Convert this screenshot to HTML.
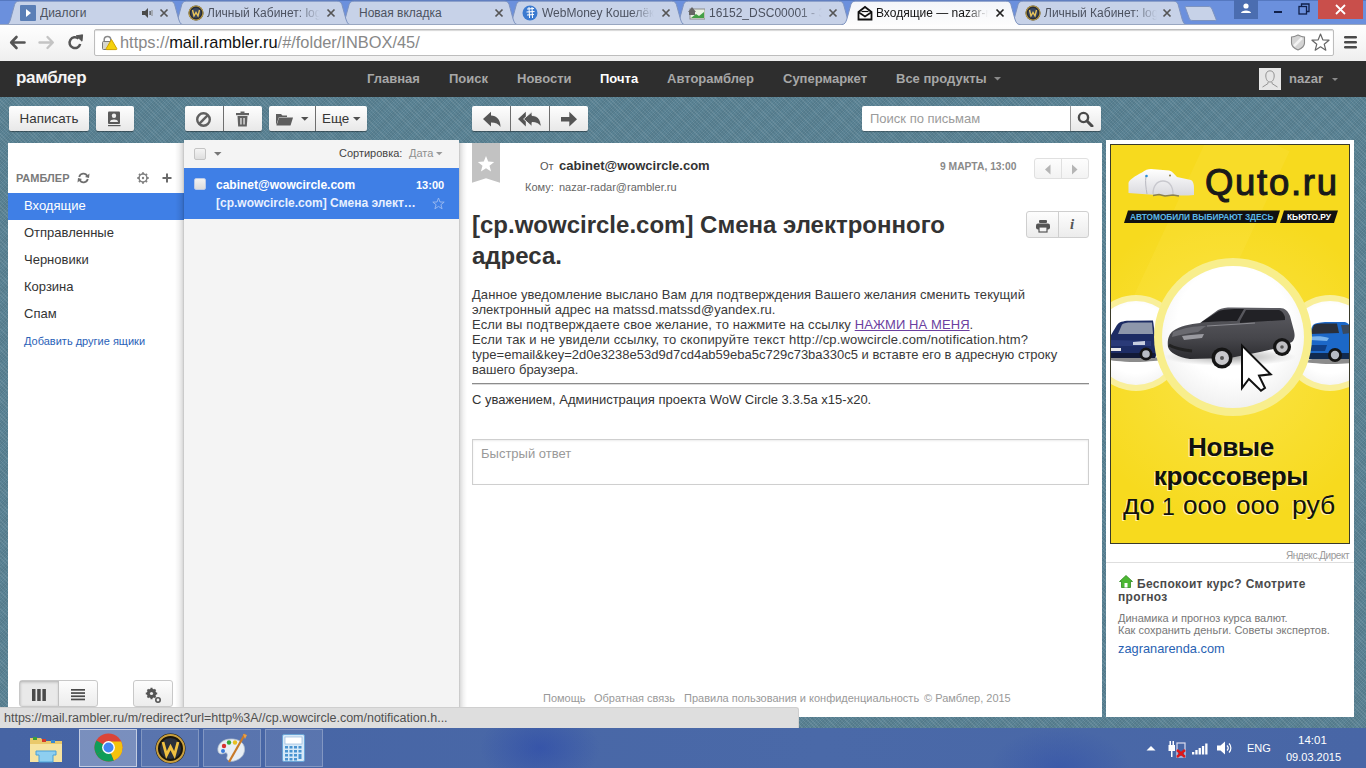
<!DOCTYPE html>
<html><head><meta charset="utf-8">
<style>
*{box-sizing:border-box;margin:0;padding:0}
html,body{width:1366px;height:768px;overflow:hidden;font-family:"Liberation Sans",sans-serif;background:#5a8191;position:relative}
.a{position:absolute}
.nw{white-space:nowrap}
#frame{left:0;top:0;width:1366px;height:25px;background:#6b90dd;border-top:1px solid #5578c0}
.tt{position:absolute;top:6px;font-size:12px;line-height:14px;color:#4c5260;white-space:nowrap;overflow:hidden}
.tx{position:absolute;top:8px;width:9px;height:9px}
#toolbar{left:0;top:25px;width:1366px;height:36px;background:linear-gradient(#fefefe,#f6f6f6 60%,#eeeeee)}
#omni{left:94px;top:29px;width:1240px;height:27px;background:#fff;border:1px solid #bdbdbd;border-radius:2px;box-shadow:inset 0 1px 1px #d8d8d8}
#url{left:120px;top:33px;font-size:16.4px;line-height:19px;color:#888}
#hdr{left:0;top:61px;width:1366px;height:36px;background:#2e2e2e}
.nav{position:absolute;top:71px;font-size:13px;line-height:15px;font-weight:bold;color:#a7a7a7;white-space:nowrap}
#denim{left:0;top:97px;width:1366px;height:631px;background-color:#5a8395;background-image:repeating-linear-gradient(45deg,rgba(255,255,255,.09) 0 1px,transparent 1px 3px),repeating-linear-gradient(-45deg,rgba(0,0,0,.07) 0 1px,transparent 1px 2px)}
.btn{position:absolute;top:106px;height:25px;background:linear-gradient(#fefefe,#e8e8e8);border-radius:2px;box-shadow:0 1px 1px rgba(0,0,0,.4);color:#363636;font-size:13.4px;line-height:25px;text-align:center}
.sep{position:absolute;top:106px;width:1px;height:25px;background:#c9c9c9}
</style></head>
<body>
<div id="frame" class="a"></div>
<svg class="a" style="left:0;top:0" width="1366" height="26" viewBox="0 0 1366 26">
<path d="M1010.1,24.5 C1012.1,24.5 1013.1,22 1014.1,19 L1018.1,4.5 C1019.1,2 1020.1,1.2 1023.1,1.2 L1173.1,1.2 C1176.1,1.2 1177.1,2 1178.1,4.5 L1182.1,19 C1183.1,22 1184.1,24.5 1186.1,24.5 Z" fill="#c7d2e8" stroke="#7d93c0" stroke-width="1"/>
<path d="M675.6,24.5 C677.6,24.5 678.6,22 679.6,19 L683.6,4.5 C684.6,2 685.6,1.2 688.6,1.2 L838.6,1.2 C841.6,1.2 842.6,2 843.6,4.5 L847.6,19 C848.6,22 849.6,24.5 851.6,24.5 Z" fill="#c7d2e8" stroke="#7d93c0" stroke-width="1"/>
<path d="M508.4,24.5 C510.4,24.5 511.4,22 512.4,19 L516.4,4.5 C517.4,2 518.4,1.2 521.4,1.2 L671.4,1.2 C674.4,1.2 675.4,2 676.4,4.5 L680.4,19 C681.4,22 682.4,24.5 684.4,24.5 Z" fill="#c7d2e8" stroke="#7d93c0" stroke-width="1"/>
<path d="M341.1,24.5 C343.1,24.5 344.1,22 345.1,19 L349.1,4.5 C350.1,2 351.1,1.2 354.1,1.2 L504.1,1.2 C507.1,1.2 508.1,2 509.1,4.5 L513.1,19 C514.1,22 515.1,24.5 517.1,24.5 Z" fill="#c7d2e8" stroke="#7d93c0" stroke-width="1"/>
<path d="M173.8,24.5 C175.8,24.5 176.8,22 177.8,19 L181.8,4.5 C182.8,2 183.8,1.2 186.8,1.2 L336.9,1.2 C339.9,1.2 340.9,2 341.9,4.5 L345.9,19 C346.9,22 347.9,24.5 349.9,24.5 Z" fill="#c7d2e8" stroke="#7d93c0" stroke-width="1"/>
<path d="M6.6,24.5 C8.6,24.5 9.6,22 10.6,19 L14.6,4.5 C15.6,2 16.6,1.2 19.6,1.2 L169.6,1.2 C172.6,1.2 173.6,2 174.6,4.5 L178.6,19 C179.6,22 180.6,24.5 182.6,24.5 Z" fill="#c7d2e8" stroke="#7d93c0" stroke-width="1"/>
<path d="M1186,6.5 L1208,6.5 C1210,6.5 1211,7 1212,9 L1216,19 C1216.5,20 1216,20.5 1215,20.5 L1193,20.5 C1191,20.5 1190,20 1189.5,19 L1185.5,8 C1185,7 1185.5,6.5 1186,6.5 Z" fill="#c7d2e8" stroke="#7d93c0" stroke-width="1"/>
<rect x="0" y="24" width="1366" height="2" fill="#98a6c0"/>
<defs><linearGradient id="ag" x1="0" y1="0" x2="0" y2="1"><stop offset="0" stop-color="#f3f5f9"/><stop offset="1" stop-color="#fdfdfd"/></linearGradient></defs>
<path d="M841.9,26 L841.9,24.5 C844.9,24.5 845.9,22 846.9,19 L850.9,4.5 C851.9,2 852.9,1.2 855.9,1.2 L1005.9,1.2 C1008.9,1.2 1009.9,2 1010.9,4.5 L1014.9,19 C1015.9,22 1016.9,24.5 1019.9,24.5 L1019.9,26 Z" fill="url(#ag)" stroke="#7d93c0" stroke-width="1"/>
</svg>
<div class="a" style="left:20px;top:5px;width:16px;height:16px;background:#5a7eb6;border-radius:1px"></div>
<svg class="a" style="left:20px;top:5px" width="16" height="16"><path d="M6,4 L11,8 L6,12 Z" fill="#fff"/></svg>
<svg class="a" style="left:188px;top:5px" width="16" height="16"><circle cx="8" cy="8" r="7.5" fill="#2a2d33"/><circle cx="8" cy="8" r="7" fill="none" stroke="#b89a45" stroke-width="1.2"/><circle cx="8" cy="8" r="5" fill="#39475e"/><path d="M4.5,5 L6,11 L8,7.5 L10,11 L11.5,5" fill="none" stroke="#e8c45a" stroke-width="1.4"/></svg>
<svg class="a" style="left:1025px;top:5px" width="16" height="16"><circle cx="8" cy="8" r="7.5" fill="#2a2d33"/><circle cx="8" cy="8" r="7" fill="none" stroke="#b89a45" stroke-width="1.2"/><circle cx="8" cy="8" r="5" fill="#39475e"/><path d="M4.5,5 L6,11 L8,7.5 L10,11 L11.5,5" fill="none" stroke="#e8c45a" stroke-width="1.4"/></svg>
<svg class="a" style="left:522px;top:5px" width="16" height="16"><circle cx="8" cy="8" r="7.5" fill="#3b7ad0"/><path d="M5,4 L12,3.5 M4.5,7 L12.5,6.5 M5,10 L12,9.5 M7,2 L7.5,13 M10,2 L10.5,13" stroke="#fff" stroke-width="1"/></svg>
<svg class="a" style="left:688px;top:6px" width="17" height="14"><rect x="2" y="3" width="15" height="10" fill="#eaf2e4" stroke="#8a8a8a" stroke-width="1"/><path d="M3,12 L8,8 L11,10 L16,6 L16,12 Z" fill="#43a046"/><path d="M0,6 L4,1 L8,6 L7,6 L7,9 L1,9 L1,6Z" fill="#666"/></svg>
<svg class="a" style="left:857px;top:5px" width="16" height="16"><path d="M1.5,7 L8,2 L14.5,7 L14.5,14.5 L1.5,14.5 Z" fill="#fff" stroke="#111" stroke-width="1.8"/><path d="M2,7.5 L8,11.5 L14,7.5" fill="none" stroke="#111" stroke-width="1.6"/><path d="M4.5,6.5 L11.5,6.5" stroke="#111" stroke-width="1.2"/></svg>
<div class="tt" style="left:40px;width:95px;color:#4c5260">Диалоги</div>
<div class="tt" style="left:207px;width:113px;color:#4c5260;-webkit-mask-image:linear-gradient(90deg,#000 80%,transparent)">Личный Кабинет: log</div>
<div class="tt" style="left:359px;width:130px;color:#4c5260">Новая вкладка</div>
<div class="tt" style="left:542px;width:112px;color:#4c5260;-webkit-mask-image:linear-gradient(90deg,#000 80%,transparent)">WebMoney Кошелёк</div>
<div class="tt" style="left:709px;width:113px;color:#4c5260;-webkit-mask-image:linear-gradient(90deg,#000 80%,transparent)">16152_DSC00001 - За</div>
<div class="tt" style="left:876px;width:112px;color:#111;-webkit-mask-image:linear-gradient(90deg,#000 80%,transparent)">Входящие — nazar-ra</div>
<div class="tt" style="left:1044px;width:113px;color:#4c5260;-webkit-mask-image:linear-gradient(90deg,#000 80%,transparent)">Личный Кабинет: log</div>
<svg class="a" style="left:159px;top:8px" width="10" height="10"><path d="M1.5,1.5 L8.5,8.5 M8.5,1.5 L1.5,8.5" stroke="#555" stroke-width="1.7"/></svg>
<svg class="a" style="left:326px;top:8px" width="10" height="10"><path d="M1.5,1.5 L8.5,8.5 M8.5,1.5 L1.5,8.5" stroke="#555" stroke-width="1.7"/></svg>
<svg class="a" style="left:494px;top:8px" width="10" height="10"><path d="M1.5,1.5 L8.5,8.5 M8.5,1.5 L1.5,8.5" stroke="#555" stroke-width="1.7"/></svg>
<svg class="a" style="left:661px;top:8px" width="10" height="10"><path d="M1.5,1.5 L8.5,8.5 M8.5,1.5 L1.5,8.5" stroke="#555" stroke-width="1.7"/></svg>
<svg class="a" style="left:828px;top:8px" width="10" height="10"><path d="M1.5,1.5 L8.5,8.5 M8.5,1.5 L1.5,8.5" stroke="#555" stroke-width="1.7"/></svg>
<svg class="a" style="left:995px;top:8px" width="10" height="10"><path d="M1.5,1.5 L8.5,8.5 M8.5,1.5 L1.5,8.5" stroke="#222" stroke-width="1.7"/></svg>
<svg class="a" style="left:1162px;top:8px" width="10" height="10"><path d="M1.5,1.5 L8.5,8.5 M8.5,1.5 L1.5,8.5" stroke="#555" stroke-width="1.7"/></svg>
<svg class="a" style="left:142px;top:8px" width="11" height="10"><path d="M0,3 L3,3 L6,0 L6,10 L3,7 L0,7 Z" fill="#4a4a4a"/><rect x="7.5" y="3" width="1.2" height="4" fill="#4a4a4a"/><rect x="9.5" y="2" width="1" height="6" fill="#888"/></svg>
<div class="a" style="left:1234px;top:0;width:24px;height:19px;background:#4b6db0"></div>
<svg class="a" style="left:1234px;top:0" width="24" height="19"><circle cx="12" cy="6" r="2.6" fill="#fff"/><path d="M7,13 C7,9.5 17,9.5 17,13 Z" fill="#fff"/></svg>
<div class="a" style="left:1274px;top:11px;width:8px;height:2px;background:#10204a"></div>
<svg class="a" style="left:1298px;top:3px" width="12" height="12"><rect x="1" y="3.5" width="7.5" height="7.5" fill="none" stroke="#10204a" stroke-width="1.3"/><path d="M3.5,3 L3.5,1 L11,1 L11,8.5 L9,8.5" fill="none" stroke="#10204a" stroke-width="1.3"/></svg>
<div class="a" style="left:1318px;top:0;width:45px;height:19px;background:#c94f4b"></div>
<svg class="a" style="left:1318px;top:0" width="45" height="19"><path d="M18,5 L27,14 M27,5 L18,14" stroke="#fff" stroke-width="1.8"/></svg>
<div id="toolbar" class="a"></div>
<svg class="a" style="left:9px;top:35px" width="17" height="15"><path d="M7.5,2 L2.2,7.5 L7.5,13 M2.5,7.5 L15.5,7.5" fill="none" stroke="#555" stroke-width="2.6" stroke-linecap="round" stroke-linejoin="round"/></svg>
<svg class="a" style="left:38px;top:35px" width="17" height="15"><path d="M9.5,2 L14.8,7.5 L9.5,13 M14.5,7.5 L1.5,7.5" fill="none" stroke="#c4c4c4" stroke-width="2.4" stroke-linecap="round" stroke-linejoin="round"/></svg>
<svg class="a" style="left:67px;top:34px" width="17" height="16"><path d="M13.2,10 A5.4,5.4 0 1 1 11.5,4.6" fill="none" stroke="#555" stroke-width="2.5"/><path d="M9.2,1.8 L15.6,0.8 L15,7.2 Z" fill="#555" stroke="#555" stroke-width="1" stroke-linejoin="round"/></svg>
<div id="omni" class="a"></div>
<svg class="a" style="left:101px;top:35px" width="17" height="16"><path d="M3.2,7 L3.2,4.8 A3.3,3.3 0 0 1 9.8,4.8 L9.8,7" fill="none" stroke="#8a8a8a" stroke-width="1.5"/><rect x="1.5" y="6.5" width="10" height="8" rx="1" fill="#d6d6cc" stroke="#7a7a7a"/><path d="M10.5,4.5 L15.8,13.6 C16.1,14.2 15.8,14.6 15.2,14.6 L5.8,14.6 C5.2,14.6 4.9,14.2 5.2,13.6 Z" fill="#f5d10a" stroke="#d2a400" stroke-width="1" stroke-linejoin="round"/></svg>
<div id="url" class="a nw">https://<span style="color:#111">mail.rambler.ru</span>/#/folder/INBOX/45/</div>
<svg class="a" style="left:1290px;top:34px" width="16" height="17"><path d="M8,1 C5,2.5 3,3 1.5,3 L1.5,9 C1.5,12.5 4.5,14.5 8,16 C11.5,14.5 14.5,12.5 14.5,9 L14.5,3 C13,3 11,2.5 8,1 Z" fill="#d4d4d4" stroke="#8a8a8a" stroke-width="1.1"/><path d="M4,12 L12,4" stroke="#f2f2f2" stroke-width="2.5"/></svg>
<svg class="a" style="left:1311px;top:33px" width="19" height="18"><path d="M9.5,1 L11.8,6.8 L18,7.2 L13.2,11.2 L14.8,17.2 L9.5,13.8 L4.2,17.2 L5.8,11.2 L1,7.2 L7.2,6.8 Z" fill="#fff" stroke="#666" stroke-width="1.2" stroke-linejoin="round"/></svg>
<svg class="a" style="left:1344px;top:35px" width="14" height="14"><rect x="0" y="1" width="13" height="2.4" rx="1.2" fill="#4a4a4a"/><rect x="0" y="6" width="13" height="2.4" rx="1.2" fill="#4a4a4a"/><rect x="0" y="11" width="13" height="2.4" rx="1.2" fill="#4a4a4a"/></svg>
<div id="hdr" class="a"></div>
<div class="a nw" style="left:16px;top:68px;font-size:17px;line-height:20px;font-weight:bold;color:#f4f4f4;letter-spacing:-0.35px">рамблер</div>
<div class="nav" style="left:367px">Главная</div>
<div class="nav" style="left:449px">Поиск</div>
<div class="nav" style="left:517px">Новости</div>
<div class="nav" style="left:600px;color:#fff">Почта</div>
<div class="nav" style="left:667px">Авторамблер</div>
<div class="nav" style="left:783px">Супермаркет</div>
<div class="nav" style="left:896px">Все продукты</div>
<svg class="a" style="left:994px;top:77px" width="8" height="4"><path d="M0,0 L7,0 L3.5,3.5Z" fill="#8a8a8a"/></svg>
<div class="a" style="left:1259px;top:68px;width:22px;height:22px;background:#e6e6e6"></div>
<svg class="a" style="left:1259px;top:68px" width="22" height="22"><path d="M11,2.8 C8.2,2.8 6.6,5 6.8,8 C7,11.5 8.5,14 11,14 C13.5,14 15,11.5 15.2,8 C15.4,5 13.8,2.8 11,2.8 Z M9,14 L9,15.5 C7,17 5,18 3.5,19 M13,14 L13,15.5 C15,17 17,18 18.5,19" fill="none" stroke="#8a8a8a" stroke-width="0.9"/></svg>
<div class="nav" style="left:1289px">nazar</div>
<svg class="a" style="left:1332px;top:78px" width="7" height="4"><path d="M0,0 L6,0 L3,3Z" fill="#8a8a8a"/></svg>
<div id="denim" class="a"></div>
<!-- toolbar buttons -->
<div class="btn" style="left:9px;width:80px">Написать</div>
<div class="btn" style="left:96px;width:38px"></div>
<svg class="a" style="left:106px;top:111px" width="17" height="16"><rect x="2" y="0.5" width="12" height="12.5" rx="1" fill="#5a5a5a"/><circle cx="8" cy="4.8" r="2.2" fill="#eee"/><path d="M4,11 C4,7.8 12,7.8 12,11 Z" fill="#eee"/><rect x="2" y="14" width="12.5" height="1.2" fill="#5a5a5a"/></svg>
<div class="btn" style="left:185px;width:77px"></div>
<div class="a" style="left:223px;top:106px;width:1px;height:25px;background:#6e6e6e"></div>
<svg class="a" style="left:195px;top:111px" width="17" height="17"><circle cx="8.5" cy="8.5" r="6.3" fill="none" stroke="#606060" stroke-width="2.4"/><path d="M4.2,12.8 L12.8,4.2" stroke="#606060" stroke-width="2.4"/></svg>
<svg class="a" style="left:236px;top:111px" width="14" height="17"><rect x="0" y="2" width="13" height="2.2" fill="#606060"/><rect x="4.5" y="0.5" width="4" height="2" fill="#606060"/><path d="M1.5,5 L11.5,5 L10.8,15.5 L2.2,15.5 Z" fill="#606060"/><rect x="4.3" y="7" width="1.3" height="6.5" fill="#e8e8e8"/><rect x="7.4" y="7" width="1.3" height="6.5" fill="#e8e8e8"/></svg>
<div class="btn" style="left:269px;width:98px"></div>
<div class="a" style="left:315px;top:106px;width:1px;height:25px;background:#6e6e6e"></div>
<svg class="a" style="left:275px;top:112px" width="19" height="15"><path d="M1,2 L6,2 L7.5,3.5 L12,3.5 L12,5 L4,5 L1,13.5 Z" fill="#5e5e5e"/><path d="M4,5.5 L18,5.5 L15.5,13.5 L1.5,13.5 Z" fill="#5e5e5e"/></svg>
<svg class="a" style="left:301px;top:117px" width="8" height="4"><path d="M0,0 L7.5,0 L3.75,3.75Z" fill="#505050"/></svg>
<div class="a nw" style="left:322px;top:111px;font-size:13.4px;line-height:15px;color:#363636">Еще</div>
<svg class="a" style="left:353px;top:117px" width="8" height="4"><path d="M0,0 L7.5,0 L3.75,3.75Z" fill="#505050"/></svg>
<div class="btn" style="left:472px;width:116px"></div>
<div class="a" style="left:510px;top:106px;width:1px;height:25px;background:#6e6e6e"></div>
<div class="a" style="left:549px;top:106px;width:1px;height:25px;background:#6e6e6e"></div>
<svg class="a" style="left:472px;top:106px" width="116" height="25"><path d="M11,13 L19,5.8 L19,9.5 C24.5,9.5 28.5,13.5 28.5,21 C26.5,17.8 23.5,16.5 19,16.5 L19,20.5 Z" fill="#555"/><path d="M46,13 L53.8,5.8 L53.8,20.5 Z" fill="#555"/><path d="M51.6,13 L60,5.8 L60,9.5 C65.5,9.5 69.2,13.5 69.2,21 C67.2,17.8 64.2,16.5 60,16.5 L60,20.5 Z" fill="#555" stroke="#f4f4f4" stroke-width="0.9"/><path d="M89,11 L97.3,11 L97.3,5.8 L105,13.2 L97.3,20.5 L97.3,15.6 L89,15.6 Z" fill="#555"/></svg>
<div class="a" style="left:862px;top:106px;width:209px;height:25px;background:#fff;border-radius:2px 0 0 2px;box-shadow:0 1px 1px rgba(0,0,0,.3)"></div>
<div class="a nw" style="left:870px;top:111px;font-size:13px;line-height:15px;color:#9b9b9b">Поиск по письмам</div>
<div class="btn" style="left:1071px;width:30px;border-radius:0 2px 2px 0"></div>
<div class="a" style="left:1070px;top:106px;width:1px;height:25px;background:#9a9a9a"></div>
<svg class="a" style="left:1077px;top:111px" width="17" height="16"><circle cx="6.5" cy="6.5" r="4.6" fill="none" stroke="#4a4a4a" stroke-width="2.4"/><path d="M10,10 L15,15" stroke="#4a4a4a" stroke-width="3" stroke-linecap="round"/></svg>
<!-- left panel -->
<div class="a" style="left:8px;top:143px;width:176px;height:574px;background:#fff"></div>
<div class="a nw" style="left:16px;top:172px;font-size:11px;line-height:13px;font-weight:bold;color:#7a7a7a">РАМБЛЕР</div>
<svg class="a" style="left:77px;top:172px" width="13" height="12"><path d="M2.2,5 A4.3,4.3 0 0 1 10.3,4.2" fill="none" stroke="#6e6e6e" stroke-width="1.8"/><path d="M10.8,7 A4.3,4.3 0 0 1 2.7,7.8" fill="none" stroke="#6e6e6e" stroke-width="1.8"/><path d="M12.5,1.5 L12,6 L8,5Z" fill="#6e6e6e"/><path d="M0.5,10.5 L1,6 L5,7Z" fill="#6e6e6e"/></svg>
<svg class="a" style="left:137px;top:172px" width="12" height="12"><path d="M6,0.3 L6,11.7 M0.3,6 L11.7,6 M2,2 L10,10 M10,2 L2,10" stroke="#808080" stroke-width="1.9"/><circle cx="6" cy="6" r="3.9" fill="#fff" stroke="#808080" stroke-width="1.5"/><circle cx="6" cy="6" r="1.2" fill="#808080"/></svg>
<svg class="a" style="left:162px;top:173px" width="10" height="10"><path d="M5,0.5 L5,9.5 M0.5,5 L9.5,5" stroke="#6a6a6a" stroke-width="2"/></svg>
<div class="a" style="left:8px;top:193px;width:176px;height:27px;background:#3f7fe6"></div>
<div class="a nw" style="left:24px;top:198px;font-size:13px;line-height:15px;color:#fff">Входящие</div>
<div class="a nw" style="left:24px;top:225px;font-size:13px;line-height:15px;color:#333">Отправленные</div>
<div class="a nw" style="left:24px;top:252px;font-size:13px;line-height:15px;color:#333">Черновики</div>
<div class="a nw" style="left:24px;top:279px;font-size:13px;line-height:15px;color:#333">Корзина</div>
<div class="a nw" style="left:24px;top:306px;font-size:13px;line-height:15px;color:#333">Спам</div>
<div class="a nw" style="left:24px;top:335px;font-size:11px;line-height:13px;color:#2a62b8">Добавить другие ящики</div>
<div class="a" style="left:19px;top:680px;width:79px;height:27px;border:1px solid #c8c8c8;border-radius:3px;background:linear-gradient(#fdfdfd,#ececec)"></div>
<div class="a" style="left:20px;top:681px;width:39px;height:25px;background:#e9e9e9;box-shadow:inset 0 1px 3px rgba(0,0,0,.25)"></div>
<div class="a" style="left:58px;top:681px;width:1px;height:25px;background:#c0c0c0"></div>
<svg class="a" style="left:32px;top:689px" width="14" height="12"><rect x="0" y="0" width="3.5" height="12" fill="#4a4a4a"/><rect x="5.2" y="0" width="3.5" height="12" fill="#4a4a4a"/><rect x="10.4" y="0" width="3.5" height="12" fill="#4a4a4a"/></svg>
<svg class="a" style="left:71px;top:689px" width="14" height="12"><rect x="0" y="0" width="14" height="1.7" fill="#4a4a4a"/><rect x="0" y="3.2" width="14" height="1.7" fill="#4a4a4a"/><rect x="0" y="6.4" width="14" height="1.7" fill="#4a4a4a"/><rect x="0" y="9.6" width="14" height="1.7" fill="#4a4a4a"/></svg>
<div class="a" style="left:133px;top:680px;width:40px;height:27px;border:1px solid #c8c8c8;border-radius:3px;background:linear-gradient(#fdfdfd,#ececec)"></div>
<svg class="a" style="left:145px;top:687px" width="17" height="17"><circle cx="6.5" cy="6.5" r="3.4" fill="none" stroke="#555" stroke-width="2.6"/><path d="M6.5,0.8 L6.5,12.2 M0.8,6.5 L12.2,6.5 M2.5,2.5 L10.5,10.5 M10.5,2.5 L2.5,10.5" stroke="#555" stroke-width="2"/><circle cx="6.5" cy="6.5" r="1.6" fill="#eee"/><circle cx="13" cy="13" r="2.2" fill="none" stroke="#555" stroke-width="1.6"/></svg>
<div class="a" style="left:175px;top:143px;width:9px;height:574px;background:linear-gradient(270deg,rgba(0,0,0,.24),rgba(0,0,0,.12) 20%,rgba(0,0,0,.05) 55%,rgba(0,0,0,0))"></div>
<!-- message list -->
<div class="a" style="left:184px;top:140px;width:275px;height:577px;background:#f4f4f4"></div>
<div class="a" style="left:194px;top:148px;width:12px;height:12px;border:1px solid #c4c4c4;border-radius:2px;background:linear-gradient(#f4f4f4,#dedede)"></div>
<svg class="a" style="left:214px;top:152px" width="8" height="4"><path d="M0,0 L7.5,0 L3.75,3.75Z" fill="#777"/></svg>
<div class="a nw" style="left:339px;top:147px;font-size:11px;line-height:13px;color:#444">Сортировка:</div>
<div class="a nw" style="left:409px;top:147px;font-size:11px;line-height:13px;color:#8f8f8f">Дата</div>
<svg class="a" style="left:436px;top:152px" width="7" height="4"><path d="M0,0 L6.5,0 L3.25,3.25Z" fill="#999"/></svg>
<div class="a" style="left:184px;top:168px;width:275px;height:51px;background:#3f7fe6"></div>
<div class="a" style="left:194px;top:178px;width:12px;height:12px;border:1px solid #b9c9e8;border-radius:2px;background:linear-gradient(#f2f2f2,#dcdcdc)"></div>
<div class="a nw" style="left:216px;top:178px;font-size:12px;line-height:15px;font-weight:bold;color:#fff">cabinet@wowcircle.com</div>
<div class="a nw" style="left:416px;top:179px;font-size:11px;line-height:13px;font-weight:bold;color:#fff">13:00</div>
<div class="a nw" style="left:216px;top:196px;font-size:12px;line-height:15px;font-weight:bold;color:#e8f0ff">[cp.wowcircle.com] Смена элект…</div>
<svg class="a" style="left:432px;top:197px" width="13" height="13"><path d="M6.5,1 L8,5 L12.2,5.1 L8.9,7.7 L10.1,11.8 L6.5,9.4 L2.9,11.8 L4.1,7.7 L0.8,5.1 L5,5 Z" fill="none" stroke="#9dbbef" stroke-width="0.9"/></svg>
<!-- message view -->
<div class="a" style="left:459px;top:143px;width:643px;height:574px;background:#fff"></div>
<div class="a" style="left:459px;top:143px;width:8px;height:574px;background:linear-gradient(90deg,rgba(0,0,0,.24),rgba(0,0,0,.12) 20%,rgba(0,0,0,.05) 55%,rgba(0,0,0,0))"></div>
<div class="a" style="left:184px;top:140px;width:275px;height:3px;background:#f4f4f4"></div>
<svg class="a" style="left:472px;top:143px" width="28" height="40"><path d="M0,0 L28,0 L28,39.7 L14,35.3 L0,39.7 Z" fill="#c2c2c2"/><path d="M14,13 L16.2,18.6 L22.2,18.9 L17.5,22.7 L19.1,28.5 L14,25.2 L8.9,28.5 L10.5,22.7 L5.8,18.9 L11.8,18.6 Z" fill="#fff"/></svg>
<div class="a nw" style="left:540px;top:160px;font-size:11px;line-height:13px;color:#555">От</div>
<div class="a nw" style="left:559px;top:158px;font-size:13px;line-height:15px;font-weight:bold;color:#333">cabinet@wowcircle.com</div>
<div class="a nw" style="left:525px;top:181px;font-size:11px;line-height:13px;color:#666">Кому:</div>
<div class="a nw" style="left:559px;top:181px;font-size:11px;line-height:13px;color:#666">nazar-radar@rambler.ru</div>
<div class="a nw" style="left:940px;top:161px;font-size:10.3px;line-height:12px;font-weight:bold;color:#8a8a8a">9 МАРТА, 13:00</div>
<div class="a" style="left:1034px;top:158px;width:55px;height:21px;border:1px solid #e0e0e0;border-radius:3px;background:linear-gradient(#fdfdfd,#f3f3f3)"></div>
<div class="a" style="left:1061px;top:159px;width:1px;height:19px;background:#e0e0e0"></div>
<svg class="a" style="left:1044px;top:163.5px" width="8" height="12"><path d="M6.5,0.5 L6.5,10.5 L1,5.5Z" fill="#b5b5b5"/></svg>
<svg class="a" style="left:1071px;top:163.5px" width="8" height="12"><path d="M1,0.5 L1,10.5 L6.5,5.5Z" fill="#b5b5b5"/></svg>
<div class="a" style="left:472px;top:209px;width:560px;font-size:24px;line-height:31px;font-weight:bold;color:#333">[cp.wowcircle.com] Смена электронного адреса.</div>
<div class="a" style="left:1026px;top:211px;width:63px;height:27px;border:1px solid #cfcfcf;border-radius:3px;background:linear-gradient(#fdfdfd,#ececec)"></div>
<div class="a" style="left:1058px;top:212px;width:1px;height:25px;background:#cfcfcf"></div>
<svg class="a" style="left:1036px;top:220px" width="14" height="13"><rect x="3" y="0" width="8" height="3" rx="1" fill="#555"/><rect x="0" y="3.5" width="14" height="6" rx="2" fill="#555"/><rect x="3" y="7" width="8" height="5" fill="#f4f4f4" stroke="#555" stroke-width="1.2"/></svg>
<div class="a nw" style="left:1070px;top:215px;font-size:15px;line-height:18px;font-style:italic;font-weight:bold;color:#555;font-family:'Liberation Serif',serif">i</div>
<div class="a nw" style="left:472px;top:287px;width:630px;font-size:13px;line-height:15px;color:#3a3a3a"><span style="letter-spacing:.063px">Данное уведомление выслано Вам для подтверждения Вашего желания сменить текущий</span><br><span style="letter-spacing:.062px">электронный адрес на matssd.matssd@yandex.ru.</span><br><span style="letter-spacing:.116px">Если вы подтверждаете свое желание, то нажмите на ссылку </span><span style="color:#6b3fa0;text-decoration:underline;letter-spacing:.085px">НАЖМИ НА МЕНЯ</span>.<br><span style="letter-spacing:.155px">Если так и не увидели ссылку, то скопируйте текст http://cp.wowcircle.com/notification.htm?</span><br>type=email&amp;key=2d0e3238e53d9d7cd4ab59eba5c729c73ba330c5 и вставте его в адресную строку<br>вашего браузера.</div>
<div class="a" style="left:472px;top:383px;width:617px;height:1px;background:#8c8c8c"></div>
<div class="a" style="left:472px;top:384px;width:617px;height:1px;background:#dcdcdc"></div>
<div class="a nw" style="left:472px;top:392px;font-size:13px;line-height:15px;color:#333">С уважением, Администрация проекта WoW Circle 3.3.5a x15-x20.</div>
<div class="a" style="left:472px;top:439px;width:617px;height:46px;border:1px solid #cfcfcf;box-shadow:inset 0 1px 2px rgba(0,0,0,.08)"></div>
<div class="a nw" style="left:481px;top:446px;font-size:13px;line-height:15px;color:#999">Быстрый ответ</div>
<div class="a nw" style="left:543px;top:692px;font-size:11px;line-height:13px;color:#999">Помощь</div>
<div class="a nw" style="left:594px;top:692px;font-size:11px;line-height:13px;color:#999">Обратная связь</div>
<div class="a nw" style="left:684px;top:692px;font-size:11px;line-height:13px;color:#999">Правила пользования и конфиденциальность</div>
<div class="a nw" style="left:924px;top:692px;font-size:11px;line-height:13px;color:#999">© Рамблер, 2015</div>
<!-- ad panel -->
<div class="a" style="left:1106px;top:140px;width:248px;height:577px;background:#fff"></div>
<div class="a" style="left:1110px;top:144px;width:240px;height:400px;background:#f7da1e;border:1px solid #3a3a2a;overflow:hidden">
 <div class="a" style="left:-40px;top:60px;width:320px;height:320px;border-radius:50%;background:radial-gradient(circle,rgba(255,240,120,.45),rgba(255,240,120,0) 70%)"></div>
 <div class="a" style="left:60px;top:-20px;width:80px;height:200px;background:rgba(255,235,90,.18);transform:rotate(25deg)"></div>
 <svg class="a" style="left:16px;top:23px" width="70" height="30"><defs><linearGradient id="cv" x1="0" y1="0" x2="0" y2="1"><stop offset="0" stop-color="#ffffff"/><stop offset="1" stop-color="#d9d9de"/></linearGradient></defs><path d="M1.5,25 L1.5,15 C2,12 8,8 15,4.5 C18,2 21,1 24,1 L42,2.5 C45,3 47,6 50,9 L64,12 C66,13 67,16 67,20 L67,27 C60,28 40,27.5 30,27 C20,26 10,26 1.5,25 Z" fill="url(#cv)"/><path d="M26,26 C26,18 30,13 36,13 C42,13 46,18 46,26" fill="none" stroke="#c8c8ce" stroke-width="1.3"/><path d="M19,8 C18,14 19,20 20,26" fill="none" stroke="#b8b8c0" stroke-width="1"/><path d="M26,27.5 L32,26.5 L38,28 L46,27 L52,28" fill="none" stroke="#8a8050" stroke-width="1.3"/><circle cx="19.5" cy="8" r="1.3" fill="#2d8fd8"/><circle cx="43" cy="7.5" r="0.9" fill="#7a6a30"/></svg>
 <div class="a nw" style="left:94px;top:18px;font-size:36.5px;line-height:40px;color:#1a1a1a;letter-spacing:1.7px;-webkit-text-stroke:1.1px #1a1a1a">Quto.ru</div>
 <svg class="a" style="left:13px;top:65px" width="215" height="14"><path d="M4,0.5 L156,0.5 L152,13 L0,13 Z" fill="#111"/><path d="M160,0.5 L214,0.5 L210,13 L156,13 Z" fill="#111"/></svg>
 <div class="a nw" style="left:19px;top:67px;font-size:8.3px;line-height:10px;font-weight:bold;color:#5cb8e8">АВТОМОБИЛИ ВЫБИРАЮТ ЗДЕСЬ</div>
 <div class="a nw" style="left:176px;top:67px;font-size:8.4px;line-height:10px;font-weight:bold;color:#fff">КЬЮТО.РУ</div>
 <div class="a" style="left:-23px;top:150px;width:96px;height:96px;border-radius:50%;background:#f9ef9a"></div>
 <div class="a" style="left:-17px;top:156px;width:84px;height:84px;border-radius:50%;background:radial-gradient(circle at 50% 45%,#ffffff 55%,#e8e8e8)"></div>
 <div class="a" style="left:171px;top:150px;width:96px;height:96px;border-radius:50%;background:#f9ef9a"></div>
 <div class="a" style="left:177px;top:156px;width:84px;height:84px;border-radius:50%;background:radial-gradient(circle at 50% 45%,#ffffff 55%,#e8e8e8)"></div>
 <svg class="a" style="left:0px;top:172px" width="48" height="46"><ellipse cx="24" cy="42" rx="26" ry="3" fill="rgba(0,0,0,.45)"/><path d="M0,18 L6,8 C8,5 12,4 18,3.8 L42,3.5 L44,18 L46,37 L44,41 L0,41 Z" fill="#1d2c64"/><path d="M7,17 L11,7.5 C13,6 16,5.5 20,5.5 L41,5.5 L42,17 Z" fill="#8e97ab"/><path d="M0,23 L40,24 L40,29 L0,29 Z" fill="#2a3a78"/><path d="M22,25 L34,24 L34,28 L22,28 Z" fill="#c8cfe0"/><rect x="0" y="31" width="10" height="3" fill="#e8e8e8"/><path d="M0,36 L44,36 L44,41 L0,41 Z" fill="#121a38"/><circle cx="35" cy="37" r="6.5" fill="#151515"/><circle cx="35" cy="37" r="3.8" fill="#b8bcc4"/></svg>
 <svg class="a" style="left:194px;top:174px" width="48" height="46"><ellipse cx="26" cy="42" rx="26" ry="3" fill="rgba(0,0,0,.45)"/><path d="M3,16 L8,6 C10,4 14,3.5 20,3 L40,3 C44,4 46,8 48,12 L48,40 L4,40 L2,30 Z" fill="#1c68c8"/><path d="M5,15 L9,6 C11,5 14,4.5 20,4.5 L32,4.5 L34,14 Z" fill="#2a2f3a"/><path d="M36,6 L44,6 L47,14 L38,15 Z" fill="#3a4a60"/><path d="M4,18 C10,17 18,17 24,19 L22,22 L5,21 Z" fill="#7ab4ec"/><path d="M4,26 L22,26 L20,32 L6,32 Z" fill="#0f3f86"/><path d="M2,34 L48,34 L48,40 L4,40 Z" fill="#102a50"/><circle cx="30" cy="36" r="7" fill="#151515"/><circle cx="30" cy="36" r="4.2" fill="#b8bcc4"/></svg>
 <div class="a" style="left:43px;top:113px;width:158px;height:158px;border-radius:50%;background:#f8ee8c"></div>
 <div class="a" style="left:51px;top:121px;width:142px;height:142px;border-radius:50%;background:radial-gradient(circle at 50% 40%,#ffffff 50%,#ececec 85%,#dcdcdc)"></div>
 <svg class="a" style="left:49px;top:150px" width="140" height="80"><defs><linearGradient id="cb" x1="0" y1="0" x2="0" y2="1"><stop offset="0" stop-color="#5c5c62"/><stop offset="0.6" stop-color="#46464b"/><stop offset="1" stop-color="#2c2c30"/></linearGradient><radialGradient id="sh" cx="0.5" cy="0.5" r="0.5"><stop offset="0" stop-color="rgba(0,0,0,.35)"/><stop offset="1" stop-color="rgba(0,0,0,0)"/></radialGradient></defs>
<ellipse cx="70" cy="62" rx="66" ry="9" fill="url(#sh)"/>
<path d="M8,52 C7,45 9,39 13,36 C20,31 30,29 40,28 L58,15 C62,13 66,12.5 72,12.5 L120,13 C125,13 128,16 130,21 L134,36 C135,40 135,44 132,47 L118,53 L100,57 L70,63 L30,64 C18,62 10,58 8,52 Z" fill="url(#cb)"/>
<path d="M41,27.5 L58,16.5 C62,14.5 70,14 84,14 L77,26 C62,26 50,27 41,27.5 Z" fill="#1e1e22"/>
<path d="M80,26 L86,15 L118,15 C121,15 123,17 125,22 L125,25 C110,26 95,27 80,28 Z" fill="#222226"/>
<path d="M13,37 C24,33 34,31 46,31 L38,37 C28,38 20,40 12,42 Z" fill="#6a6a70"/>
<path d="M22,41 C30,40 38,39 44,39 L42,43 L24,45 Z" fill="#9a9aa0"/>
<path d="M47,31 C62,30 80,29 95,28" stroke="#8a8a90" stroke-width="1.2" fill="none"/>
<path d="M9,50 C14,53 22,55 32,56" stroke="#222" stroke-width="3" fill="none"/>
<circle cx="62" cy="63" r="10.5" fill="#151515"/><circle cx="62" cy="63" r="7" fill="#c8c8cc"/><circle cx="62" cy="63" r="2" fill="#555"/>
<circle cx="122" cy="52" r="9" fill="#151515"/><circle cx="122" cy="52" r="5.8" fill="#c0c0c4"/><circle cx="122" cy="52" r="1.8" fill="#555"/>

</svg>
 <svg class="a" style="left:129px;top:198px" width="34" height="52"><path d="M2,2.6 L2,45 L8.9,36 L21,47.7 L25,45 L19,32.7 L30.7,31.3 Z" fill="#fff" stroke="#111" stroke-width="2" stroke-linejoin="miter"/></svg>
 <div class="a nw" style="left:0;top:288px;width:240px;text-align:center;font-size:26px;line-height:29px;font-weight:bold;color:#111;letter-spacing:-0.3px;text-shadow:-1px 1px 0 #fff6b0">Новые<br>кроссоверы</div>
 <div class="a nw" style="left:12px;top:345px;font-size:28px;line-height:30px;color:#111;text-shadow:-1px 1px 0 #fff6b0">до</div>
 <div class="a nw" style="left:51px;top:348.5px;font-size:23px;line-height:26px;color:#111;text-shadow:-1px 1px 0 #fff6b0">1</div>
 <div class="a nw" style="left:72px;top:345px;font-size:26px;line-height:30px;color:#111;text-shadow:-1px 1px 0 #fff6b0">ooo</div>
 <div class="a nw" style="left:125px;top:345px;font-size:26px;line-height:30px;color:#111;text-shadow:-1px 1px 0 #fff6b0">ooo</div>
 <div class="a nw" style="left:181px;top:345px;font-size:26.5px;line-height:30px;color:#111;text-shadow:-1px 1px 0 #fff6b0">руб</div>
</div>
<div class="a nw" style="left:1286px;top:549px;font-size:10px;line-height:13px;color:#9a9a9a;letter-spacing:-0.45px">Яндекс.Директ</div>
<div class="a" style="left:1106px;top:562px;width:248px;height:1px;background:#dedede"></div>
<svg class="a" style="left:1119px;top:574.5px" width="14" height="13"><path d="M7,0.5 L13.5,6.5 L11.5,6.5 L11.5,12.5 L2.5,12.5 L2.5,6.5 L0.5,6.5 Z" fill="#4cb833" stroke="#2e8a1e" stroke-width="0.8"/><rect x="5.5" y="8" width="3" height="4.5" fill="#fff"/></svg>
<div class="a" style="left:1118px;top:577.5px;width:230px;font-size:12px;line-height:13.5px;font-weight:bold;color:#4a4a4a;letter-spacing:0.33px;text-indent:19px">Беспокоит курс? Смотрите прогноз</div>
<div class="a nw" style="left:1118px;top:611.5px;font-size:11px;line-height:12.6px;color:#777">Динамика и прогноз курса валют.<br>Как сохранить деньги. Советы экспертов.</div>
<div class="a nw" style="left:1118px;top:641px;font-size:12.8px;line-height:16px;color:#2962b3">zagranarenda.com</div>
<!-- status bubble -->
<div class="a" style="left:0;top:707px;width:799px;height:21px;background:#dedede;border-top:1px solid #cfcfcf;border-right:1px solid #cfcfcf;border-radius:0 3px 0 0"></div>
<div class="a nw" style="left:4px;top:711px;font-size:12.5px;line-height:15px;color:#505050">https://mail.rambler.ru/m/redirect?url=http%3A//cp.wowcircle.com/notification.h...</div>
<!-- taskbar -->
<div class="a" style="left:0;top:728px;width:1366px;height:40px;background:radial-gradient(ellipse 60px 40px at 540px 20px,rgba(40,70,170,.55),rgba(40,70,170,0)),radial-gradient(ellipse 70px 40px at 1060px 40px,rgba(40,70,170,.4),rgba(40,70,170,0)),linear-gradient(90deg,#4664a4,#4a69a8 60%,#4866a6)"></div>
<div class="a" style="left:79px;top:729px;width:58px;height:38px;background:rgba(255,255,255,.28);border:1px solid rgba(255,255,255,.55)"></div>
<div class="a" style="left:141px;top:729px;width:58px;height:38px;background:rgba(255,255,255,.1);border:1px solid rgba(255,255,255,.25)"></div>
<div class="a" style="left:203px;top:729px;width:58px;height:38px;background:rgba(255,255,255,.1);border:1px solid rgba(255,255,255,.25)"></div>
<div class="a" style="left:265px;top:729px;width:58px;height:38px;background:rgba(255,255,255,.1);border:1px solid rgba(255,255,255,.25)"></div>
<svg class="a" style="left:29px;top:734px" width="34" height="30"><path d="M1,4 L12,4 L14,7 L33,7 L33,28 L1,28 Z" fill="#e9c86a"/><rect x="4" y="3" width="4" height="3" fill="#3a9e3a"/><rect x="13" y="5" width="4" height="3" fill="#d43a2a"/><rect x="22" y="6" width="4" height="3" fill="#3a8ad0"/><path d="M1,10 L33,10 L33,28 L1,28 Z" fill="#f6e3a0"/><path d="M7,17 L27,17 L27,21 L24,21 L24,28 L10,28 L10,21 L7,21 Z" fill="#8ecff0" stroke="#4aa0d8" stroke-width="1"/></svg>
<svg class="a" style="left:94px;top:733px" width="29" height="29"><circle cx="14.5" cy="14.5" r="14" fill="#db4437"/><path d="M14.5,14.5 L2.4,21.5 A14,14 0 0 0 20,27.4 Z" fill="#0f9d58"/><path d="M14.5,14.5 L20,27.4 A14,14 0 0 0 28.5,14.5 L14.5,14.5 Z" fill="#f4c20d"/><path d="M14.5,8.5 L27.2,8.5 A14,14 0 0 1 28.5,14.5 L20,27.4 Z" fill="#f4c20d"/><path d="M14.5,14.5 L2.4,21.5 A14,14 0 0 1 2.5,7.5 Z" fill="#0f9d58"/><circle cx="14.5" cy="14.5" r="6.4" fill="#fff"/><circle cx="14.5" cy="14.5" r="5" fill="#4285f4"/></svg>
<svg class="a" style="left:155px;top:733px" width="31" height="31"><circle cx="15.5" cy="15.5" r="15" fill="#1a1508"/><circle cx="15.5" cy="15.5" r="13.5" fill="none" stroke="#c9a040" stroke-width="2"/><circle cx="15.5" cy="15.5" r="10.5" fill="#2a2f3a"/><path d="M8,9 L11.5,22 L15.5,14 L19.5,22 L23,9" fill="none" stroke="#f0c040" stroke-width="2.8" stroke-linejoin="miter"/></svg>
<svg class="a" style="left:216px;top:733px" width="32" height="31"><path d="M15,6 C6,6 1,12 2,18 C3,22 7,21 9,20 C11,19 12,22 11,24 C10,27 14,29 18,28 C26,26 30,20 28,13 C26,8 21,6 15,6 Z" fill="#e8eef4" stroke="#b8c4d0" stroke-width="0.8"/><circle cx="8" cy="13" r="2.2" fill="#d83030"/><circle cx="13" cy="9.5" r="2.2" fill="#38a838"/><circle cx="19" cy="9.5" r="2.2" fill="#e8c020"/><circle cx="7" cy="18" r="2" fill="#3a7ad8"/><path d="M29,1 L13,29" stroke="#c87a28" stroke-width="2.2"/><path d="M27,1 L31,2 L29,6 Z" fill="#e8a048"/></svg>
<svg class="a" style="left:282px;top:734px" width="23" height="28"><rect x="0.5" y="0.5" width="22" height="27" rx="1.5" fill="#d6e9f8" stroke="#6aa4d6"/><rect x="3" y="3" width="17" height="7" fill="#fff" stroke="#88b0d8" stroke-width="0.6"/><g fill="#4a94d0"><rect x="3" y="12" width="3" height="2.5"/><rect x="7.5" y="12" width="3" height="2.5"/><rect x="12" y="12" width="3" height="2.5"/><rect x="16.5" y="12" width="3" height="2.5"/><rect x="3" y="16" width="3" height="2.5"/><rect x="7.5" y="16" width="3" height="2.5"/><rect x="12" y="16" width="3" height="2.5"/><rect x="16.5" y="16" width="3" height="2.5"/><rect x="3" y="20" width="3" height="2.5"/><rect x="7.5" y="20" width="3" height="2.5"/><rect x="12" y="20" width="3" height="2.5"/><rect x="16.5" y="20" width="3" height="5"/><rect x="3" y="24" width="3" height="2.5"/><rect x="7.5" y="24" width="3" height="2.5"/><rect x="12" y="24" width="3" height="2.5"/></g></svg>
<svg class="a" style="left:1146px;top:745px" width="10" height="6"><path d="M0.5,5.5 L5,1 L9.5,5.5 Z" fill="#fff"/></svg>
<svg class="a" style="left:1168px;top:740px" width="18" height="18"><rect x="1.5" y="1" width="1.5" height="4" fill="#fff"/><rect x="4.5" y="1" width="1.5" height="4" fill="#fff"/><rect x="0.5" y="5" width="6.5" height="6" fill="#fff"/><rect x="3" y="11" width="1.5" height="6" fill="#fff"/><rect x="9" y="3" width="8" height="14" fill="none" stroke="#dde" stroke-width="1.2"/><path d="M9,10 L17,17 M17,10 L9,17" stroke="#e01818" stroke-width="2.4"/></svg>
<svg class="a" style="left:1192px;top:743px" width="17" height="12"><rect x="0" y="9" width="2.3" height="2.5" fill="#fff"/><rect x="3.3" y="7" width="2.3" height="4.5" fill="#fff"/><rect x="6.6" y="5" width="2.3" height="6.5" fill="#fff"/><rect x="9.9" y="3" width="2.3" height="8.5" fill="#fff"/><rect x="13.2" y="0.5" width="2.3" height="11" fill="#fff"/></svg>
<svg class="a" style="left:1216px;top:740px" width="17" height="16"><path d="M1,5.5 L4.5,5.5 L9,1.5 L9,14.5 L4.5,10.5 L1,10.5 Z" fill="#fff"/><path d="M11,5.5 C12.5,7 12.5,9 11,10.5 M13,3.5 C15.5,6 15.5,10 13,12.5" fill="none" stroke="#fff" stroke-width="1.2"/></svg>
<div class="a nw" style="left:1247px;top:741px;font-size:11px;line-height:14px;color:#fff">ENG</div>
<div class="a nw" style="left:1298px;top:733px;font-size:11.5px;line-height:14px;color:#fff">14:01</div>
<div class="a nw" style="left:1286px;top:750px;font-size:11px;line-height:14px;color:#fff">09.03.2015</div>
</body></html>
